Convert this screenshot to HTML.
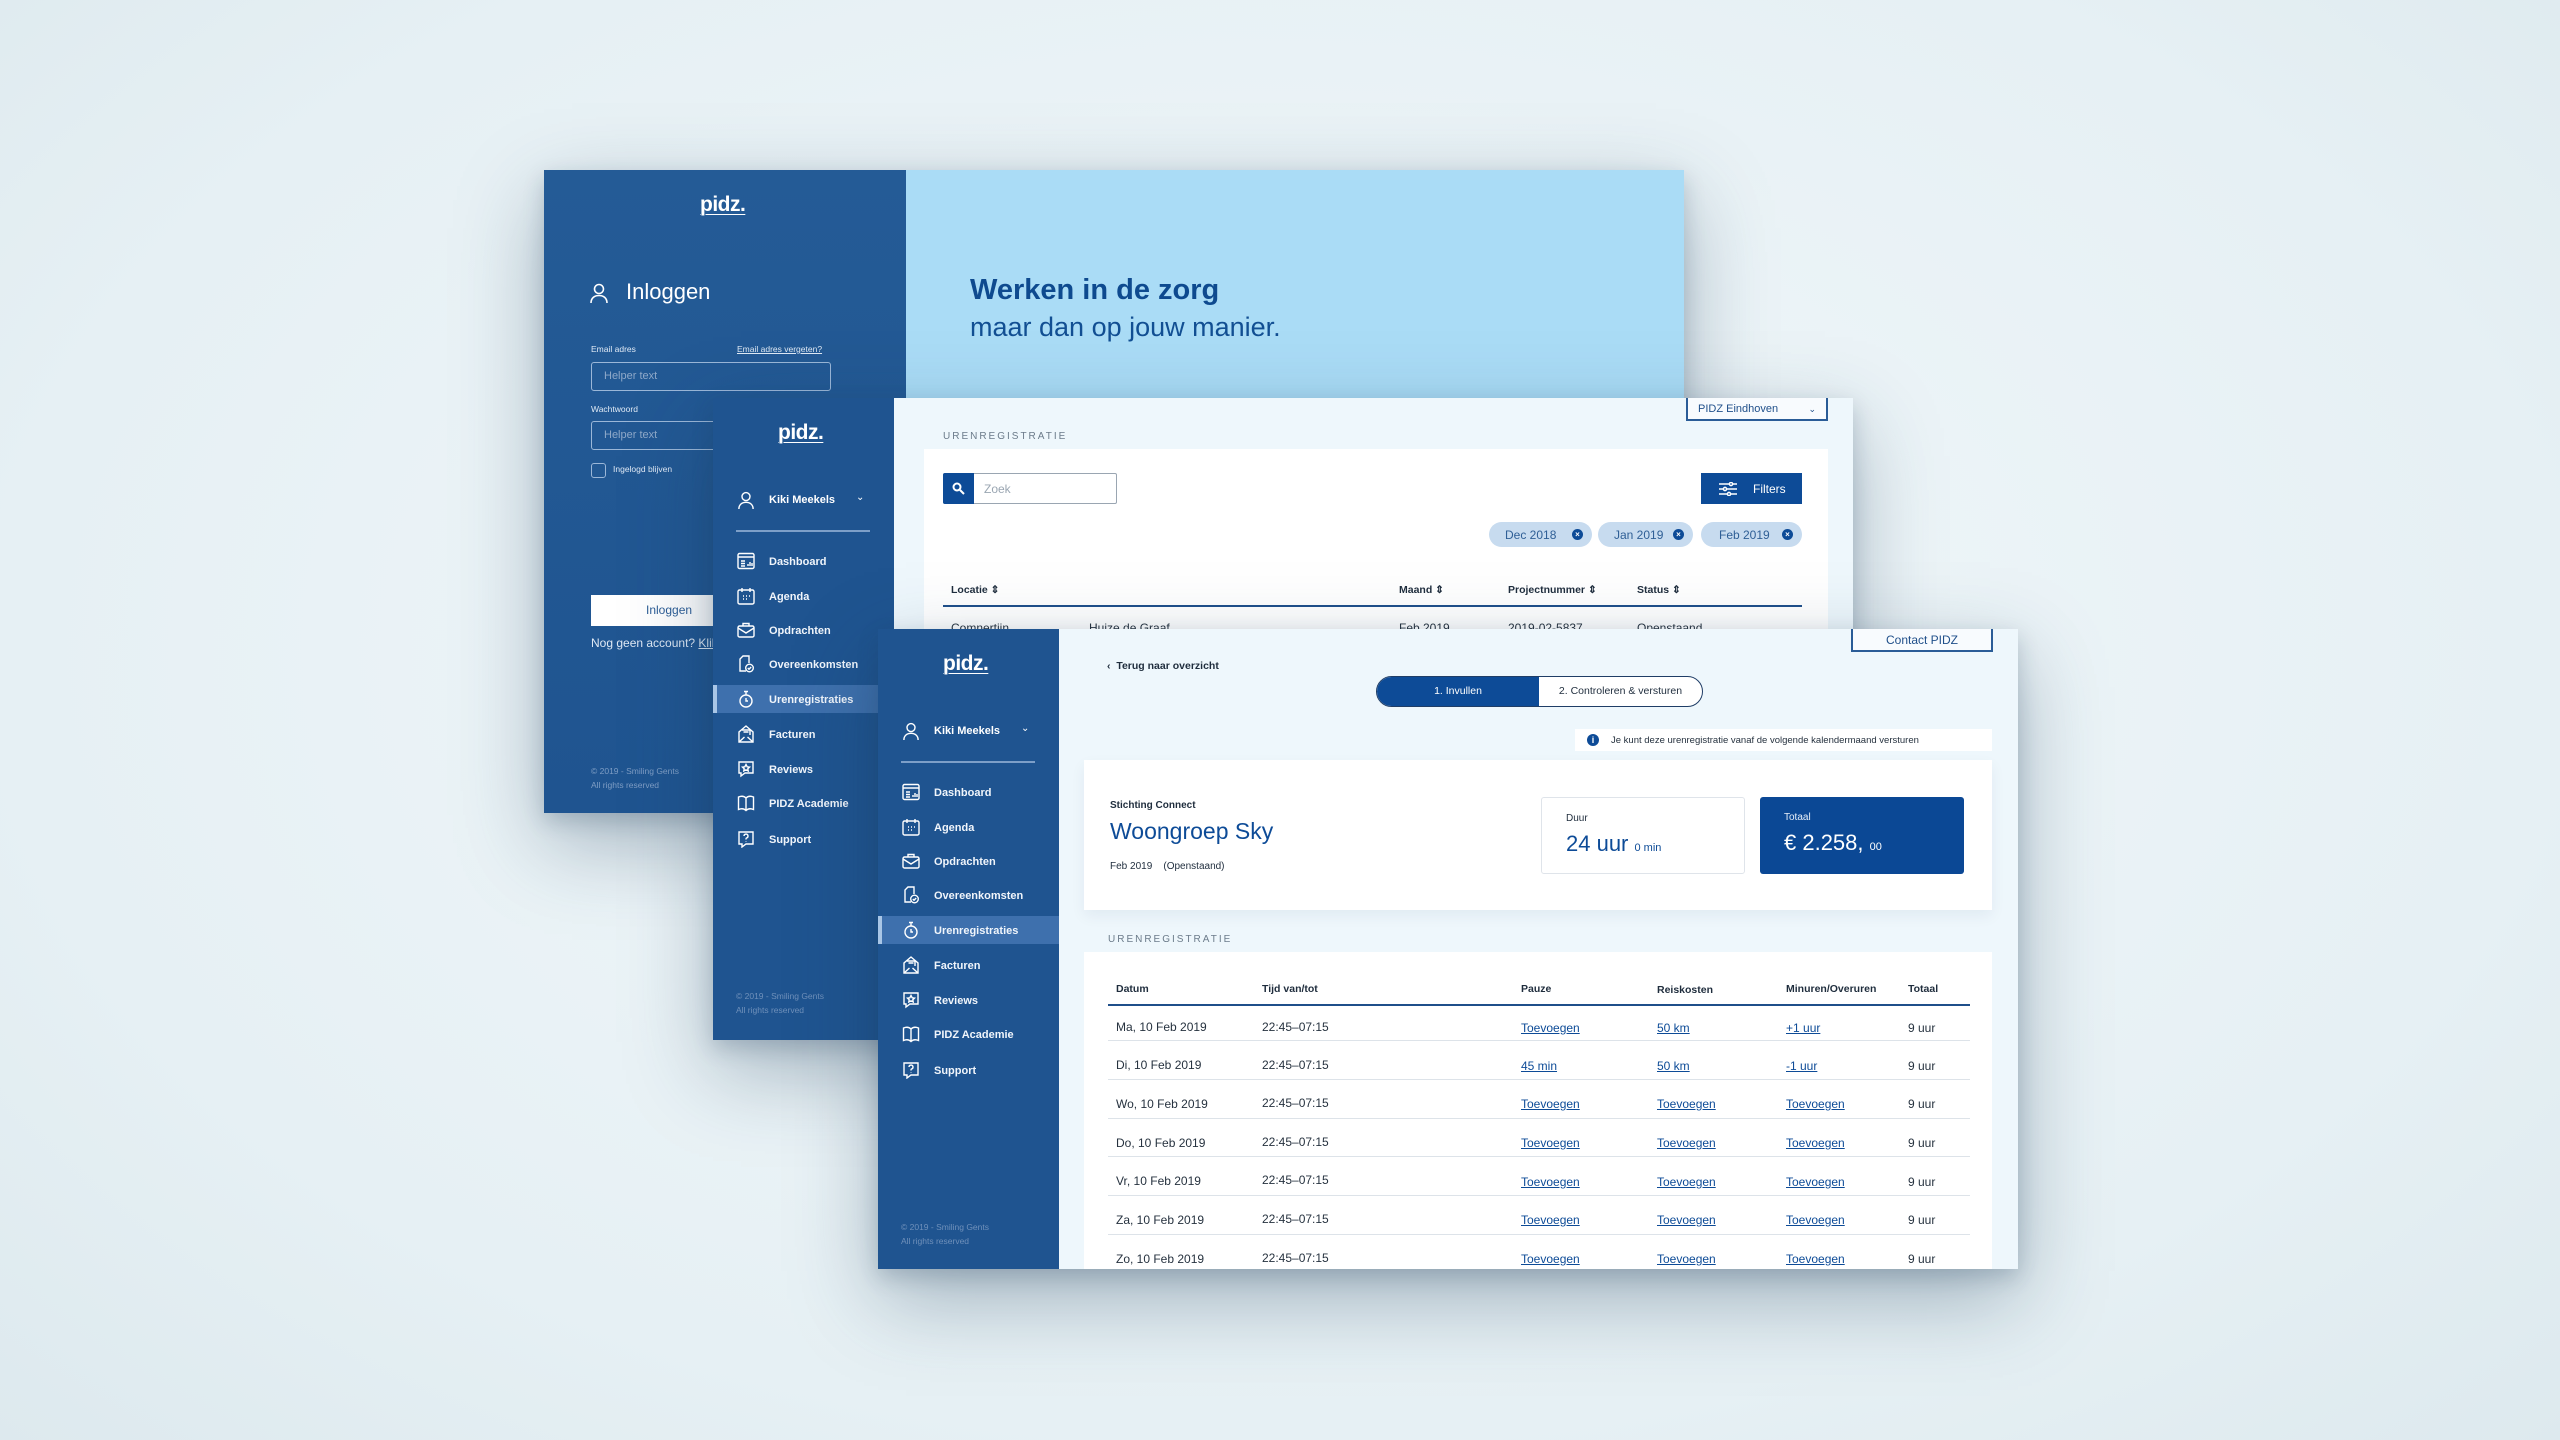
<!DOCTYPE html>
<html><head><meta charset="utf-8"><style>
*{margin:0;padding:0;box-sizing:border-box}
body{width:2560px;height:1440px;overflow:hidden;background:radial-gradient(ellipse at 50% 45%,#f2f8fb 0%,#e6f0f4 70%,#dde9ee 100%);font-family:"Liberation Sans",sans-serif;position:relative}
.a{position:absolute;white-space:nowrap}
.win{position:absolute;width:1140px;height:642px;overflow:hidden;box-shadow:0 30px 80px rgba(30,60,90,.35),0 8px 20px rgba(30,60,90,.2)}
.side{position:absolute;left:0;top:0;width:181px;height:100%;background:#1f5490;color:#fff}
.logo{font-weight:bold;font-size:21px;color:#fff;text-decoration:underline;text-decoration-thickness:1px;text-underline-offset:3px;letter-spacing:-.5px}
.mi{position:absolute;left:0;width:181px;height:28px;font-size:11px;font-weight:bold;color:#f0f5fb;line-height:30px;padding-left:56px}
.mi svg{position:absolute;left:24px;top:5px}
.mi.on{background:#3e70ad;border-left:4px solid #a9c6e6;padding-left:52px}
.mi.on svg{left:20px}
.content{position:absolute;left:181px;top:0;right:0;bottom:0;background:#eef7fc}
.lbl{font-size:10px;letter-spacing:2px;color:#6b7b8a}
.card{position:absolute;background:#fff}
.th{font-size:10.5px;font-weight:bold;color:#1f2d3d}
.td{font-size:12px;color:#26323f}
.lnk{font-size:12px;color:#0d4b97;text-decoration:underline}
.chip{position:absolute;height:25px;border-radius:13px;background:#c7dbef;color:#2f5f96;font-size:12px;line-height:25px;padding-left:16px}
.chip i{position:absolute;right:9px;top:7px;width:11px;height:11px;border-radius:50%;background:#0d4b97;color:#fff;font-size:8px;line-height:11px;text-align:center;font-style:normal;font-weight:bold}
</style></head><body>

<div class="win" style="left:544px;top:170px;height:643px;">
  <div style="position:absolute;left:0;top:0;width:362px;height:100%;background:linear-gradient(#245b96,#1f5490)"></div>
  <div style="position:absolute;left:362px;top:0;right:0;height:100%;background:#aadcf6"></div>
  <div class="a logo" style="left:156px;top:23px">pidz.</div>
  <svg class="a" style="left:46px;top:113px" width="18" height="22" viewBox="0 0 18 22" fill="none" stroke="#fff" stroke-width="1.6"><circle cx="9" cy="6" r="4.5"/><path d="M1 20c0-5 3.5-7.5 8-7.5s8 2.5 8 7.5"/></svg>
  <div class="a" style="left:82px;top:109px;font-size:22px;color:#fff">Inloggen</div>
  <div class="a" style="left:47px;top:174px;font-size:8.5px;color:#dfe9f5">Email adres</div>
  <div class="a" style="left:193px;top:174px;font-size:8.5px;color:#dfe9f5;text-decoration:underline">Email adres vergeten?</div>
  <div class="a" style="left:47px;top:192px;width:240px;height:29px;border:1.5px solid #9bb7d8;border-radius:3px;font-size:11px;color:#8fa9c9;line-height:26px;padding-left:12px">Helper text</div>
  <div class="a" style="left:47px;top:234px;font-size:8.5px;color:#dfe9f5">Wachtwoord</div>
  <div class="a" style="left:47px;top:251px;width:240px;height:29px;border:1.5px solid #9bb7d8;border-radius:3px;font-size:11px;color:#8fa9c9;line-height:26px;padding-left:12px">Helper text</div>
  <div class="a" style="left:47px;top:293px;width:15px;height:15px;border:1.5px solid #9bb7d8;border-radius:3px"></div>
  <div class="a" style="left:69px;top:294px;font-size:8.5px;color:#dfe9f5">Ingelogd blijven</div>
  <div class="a" style="left:47px;top:425px;width:240px;height:31px;background:#fff;font-size:12px;color:#2c5d96;line-height:31px;padding-left:55px">Inloggen</div>
  <div class="a" style="left:47px;top:466px;font-size:12px;color:#dfe9f5">Nog geen account? <u>Klik hier</u></div>
  <div class="a" style="left:47px;top:594px;font-size:8.5px;color:#7e9dc4;line-height:14px">© 2019 - Smiling Gents<br>All rights reserved</div>
  <div class="a" style="left:426px;top:104px;font-size:29px;font-weight:bold;color:#0e4a8f">Werken in de zorg</div>
  <div class="a" style="left:426px;top:142px;font-size:27px;color:#124f93">maar dan op jouw manier.</div>
</div>

<div class="win" style="left:713px;top:398px;">
  <div class="side">
    <div class="a logo" style="left:65px;top:23px">pidz.</div>
    <svg class="a" style="left:25px;top:93px" width="16" height="20" viewBox="0 0 18 22" fill="none" stroke="#fff" stroke-width="1.6"><circle cx="9" cy="6" r="4.5"/><path d="M1 20c0-5 3.5-7.5 8-7.5s8 2.5 8 7.5"/></svg>
    <div class="a" style="left:56px;top:96px;font-size:11px;font-weight:bold">Kiki Meekels</div>
    <div class="a" style="left:143px;top:94px;font-size:10px">⌄</div>
    <div class="a" style="left:23px;top:132px;width:134px;height:1.5px;background:#7d9fc8"></div>
    <div class="mi" style="top:149px"><svg width="18" height="18" viewBox="0 0 18 18" fill="none" stroke="#fff" stroke-width="1.4"><rect x="1" y="1.5" width="16" height="15" rx="1.5"/><path d="M1 5h16M4 9h4M4 11.5h4M4 14h4M11 14v-2M13 14v-4M15 14v-3"/></svg>Dashboard</div>
    <div class="mi" style="top:184px"><svg width="18" height="18" viewBox="0 0 18 18" fill="none" stroke="#fff" stroke-width="1.4"><rect x="1" y="3" width="16" height="14" rx="1.5"/><path d="M5 1v4M13 1v4M6 9h1M9 9h1M12 9h1M6 12h1M9 12h1"/></svg>Agenda</div>
    <div class="mi" style="top:218px"><svg width="18" height="18" viewBox="0 0 18 18" fill="none" stroke="#fff" stroke-width="1.4"><rect x="1" y="5" width="16" height="11" rx="1.5"/><path d="M6 5V2.5h6V5M1 7l8 5 8-5"/></svg>Opdrachten</div>
    <div class="mi" style="top:252px"><svg width="18" height="18" viewBox="0 0 18 18" fill="none" stroke="#fff" stroke-width="1.4"><path d="M9 16H3V4l3-3h6v7"/><circle cx="12.5" cy="13" r="3.8"/><path d="M10.8 13l1.2 1.2 2.2-2.2"/></svg>Overeenkomsten</div>
    <div class="mi on" style="top:287px"><svg width="18" height="18" viewBox="0 0 18 18" fill="none" stroke="#fff" stroke-width="1.4"><circle cx="9" cy="11" r="6"/><path d="M7 1.5h4M9 1.5V5M9 8v3h2"/></svg>Urenregistraties</div>
    <div class="mi" style="top:322px"><svg width="18" height="18" viewBox="0 0 18 18" fill="none" stroke="#fff" stroke-width="1.4"><path d="M2 7v10h14V7L9 1z"/><path d="M2 17l5.5-5M16 17l-5.5-5M5 5h8v5M6.5 7h5"/></svg>Facturen</div>
    <div class="mi" style="top:357px"><svg width="18" height="18" viewBox="0 0 18 18" fill="none" stroke="#fff" stroke-width="1.4"><path d="M2 2h14v11H8l-4 3v-3H2z"/><path d="M9 4.5l1.2 2.3 2.3.3-1.7 1.6.4 2.3L9 9.8 6.8 11l.4-2.3L5.5 7.1l2.3-.3z"/></svg>Reviews</div>
    <div class="mi" style="top:391px"><svg width="18" height="18" viewBox="0 0 18 18" fill="none" stroke="#fff" stroke-width="1.4"><path d="M9 4C7 2 4 2 1.5 3v12.5c2.5-1 5.5-1 7.5 1 2-2 5-2 7.5-1V3C14 2 11 2 9 4v12.5"/></svg>PIDZ Academie</div>
    <div class="mi" style="top:427px"><svg width="18" height="18" viewBox="0 0 18 18" fill="none" stroke="#fff" stroke-width="1.4"><path d="M2 2h14v12H9l-4 3v-3H2z"/><path d="M7 6a2 2 0 1 1 2.5 2c-.5.2-.5.6-.5 1.5M9 11.5v.5"/></svg>Support</div>
    <div class="a" style="left:23px;top:591px;font-size:8.5px;color:#6f90ba;line-height:14px">© 2019 - Smiling Gents<br>All rights reserved</div>
  </div>
  <div class="content">
    <div class="a" style="left:792px;top:0;width:142px;height:23px;border:2px solid #2a5c97;border-top:none;background:#f8fbfe;font-size:11px;color:#1f4f8a;line-height:22px;padding-left:10px">PIDZ Eindhoven<span style="position:absolute;right:10px;font-size:9px">⌄</span></div>
    <div class="a lbl" style="left:49px;top:33px">URENREGISTRATIE</div>
    <div class="card" style="left:30px;top:51px;width:904px;height:600px">
      <div class="a" style="left:19px;top:24px;width:174px;height:31px;border:1.5px solid #9aa6b2;border-radius:2px;background:#fff"></div>
      <div class="a" style="left:19px;top:24px;width:31px;height:31px;background:#0d4b97;border-radius:2px 0 0 2px"><svg style="position:absolute;left:9px;top:9px" width="13" height="13" viewBox="0 0 13 13" fill="none" stroke="#fff" stroke-width="2"><circle cx="5" cy="5" r="3.5"/><path d="M8 8l4 4"/></svg></div>
      <div class="a" style="left:60px;top:33px;font-size:12px;color:#9aa6b2">Zoek</div>
      <div class="a" style="left:777px;top:24px;width:101px;height:31px;background:#0d4b97;color:#fff;font-size:12px;line-height:32px;padding-left:52px"><svg style="position:absolute;left:17px;top:9px" width="20" height="14" viewBox="0 0 20 14" fill="none" stroke="#fff" stroke-width="1.5"><path d="M1 2h18M1 7h18M1 12h18"/><circle cx="13" cy="2" r="1.6" fill="#0d4b97"/><circle cx="7" cy="7" r="1.6" fill="#0d4b97"/><circle cx="11" cy="12" r="1.6" fill="#0d4b97"/></svg>Filters</div>
      <div class="chip" style="left:565px;top:73px;width:103px;line-height:27px">Dec 2018<i>×</i></div>
      <div class="chip" style="left:674px;top:73px;width:95px;line-height:27px">Jan 2019<i>×</i></div>
      <div class="chip" style="left:777px;top:73px;width:101px;padding-left:18px;line-height:27px">Feb 2019<i>×</i></div>
      <div class="a th" style="left:27px;top:135px">Locatie ⇕</div>
      <div class="a th" style="left:475px;top:135px">Maand ⇕</div>
      <div class="a th" style="left:584px;top:135px">Projectnummer ⇕</div>
      <div class="a th" style="left:713px;top:135px">Status ⇕</div>
      <div class="a" style="left:19px;top:156px;width:859px;height:2px;background:#1f4f8a"></div>
      <div class="a td" style="left:27px;top:172px">Comnertiin</div>
      <div class="a td" style="left:165px;top:172px">Huize de Graaf</div>
      <div class="a td" style="left:475px;top:172px">Feb 2019</div>
      <div class="a td" style="left:584px;top:172px">2019-02-5837</div>
      <div class="a td" style="left:713px;top:172px">Openstaand</div>
    </div>
  </div>
</div>

<div class="win" style="left:878px;top:629px;height:640px;">
  <div class="side">
    <div class="a logo" style="left:65px;top:23px">pidz.</div>
    <svg class="a" style="left:25px;top:93px" width="16" height="20" viewBox="0 0 18 22" fill="none" stroke="#fff" stroke-width="1.6"><circle cx="9" cy="6" r="4.5"/><path d="M1 20c0-5 3.5-7.5 8-7.5s8 2.5 8 7.5"/></svg>
    <div class="a" style="left:56px;top:96px;font-size:11px;font-weight:bold">Kiki Meekels</div>
    <div class="a" style="left:143px;top:94px;font-size:10px">⌄</div>
    <div class="a" style="left:23px;top:132px;width:134px;height:1.5px;background:#7d9fc8"></div>
    <div class="mi" style="top:149px"><svg width="18" height="18" viewBox="0 0 18 18" fill="none" stroke="#fff" stroke-width="1.4"><rect x="1" y="1.5" width="16" height="15" rx="1.5"/><path d="M1 5h16M4 9h4M4 11.5h4M4 14h4M11 14v-2M13 14v-4M15 14v-3"/></svg>Dashboard</div>
    <div class="mi" style="top:184px"><svg width="18" height="18" viewBox="0 0 18 18" fill="none" stroke="#fff" stroke-width="1.4"><rect x="1" y="3" width="16" height="14" rx="1.5"/><path d="M5 1v4M13 1v4M6 9h1M9 9h1M12 9h1M6 12h1M9 12h1"/></svg>Agenda</div>
    <div class="mi" style="top:218px"><svg width="18" height="18" viewBox="0 0 18 18" fill="none" stroke="#fff" stroke-width="1.4"><rect x="1" y="5" width="16" height="11" rx="1.5"/><path d="M6 5V2.5h6V5M1 7l8 5 8-5"/></svg>Opdrachten</div>
    <div class="mi" style="top:252px"><svg width="18" height="18" viewBox="0 0 18 18" fill="none" stroke="#fff" stroke-width="1.4"><path d="M9 16H3V4l3-3h6v7"/><circle cx="12.5" cy="13" r="3.8"/><path d="M10.8 13l1.2 1.2 2.2-2.2"/></svg>Overeenkomsten</div>
    <div class="mi on" style="top:287px"><svg width="18" height="18" viewBox="0 0 18 18" fill="none" stroke="#fff" stroke-width="1.4"><circle cx="9" cy="11" r="6"/><path d="M7 1.5h4M9 1.5V5M9 8v3h2"/></svg>Urenregistraties</div>
    <div class="mi" style="top:322px"><svg width="18" height="18" viewBox="0 0 18 18" fill="none" stroke="#fff" stroke-width="1.4"><path d="M2 7v10h14V7L9 1z"/><path d="M2 17l5.5-5M16 17l-5.5-5M5 5h8v5M6.5 7h5"/></svg>Facturen</div>
    <div class="mi" style="top:357px"><svg width="18" height="18" viewBox="0 0 18 18" fill="none" stroke="#fff" stroke-width="1.4"><path d="M2 2h14v11H8l-4 3v-3H2z"/><path d="M9 4.5l1.2 2.3 2.3.3-1.7 1.6.4 2.3L9 9.8 6.8 11l.4-2.3L5.5 7.1l2.3-.3z"/></svg>Reviews</div>
    <div class="mi" style="top:391px"><svg width="18" height="18" viewBox="0 0 18 18" fill="none" stroke="#fff" stroke-width="1.4"><path d="M9 4C7 2 4 2 1.5 3v12.5c2.5-1 5.5-1 7.5 1 2-2 5-2 7.5-1V3C14 2 11 2 9 4v12.5"/></svg>PIDZ Academie</div>
    <div class="mi" style="top:427px"><svg width="18" height="18" viewBox="0 0 18 18" fill="none" stroke="#fff" stroke-width="1.4"><path d="M2 2h14v12H9l-4 3v-3H2z"/><path d="M7 6a2 2 0 1 1 2.5 2c-.5.2-.5.6-.5 1.5M9 11.5v.5"/></svg>Support</div>
    <div class="a" style="left:23px;top:591px;font-size:8.5px;color:#6f90ba;line-height:14px">© 2019 - Smiling Gents<br>All rights reserved</div>
  </div>
  <div class="content">
    <div class="a" style="left:792px;top:0;width:142px;height:23px;border:2px solid #2a5c97;border-top:none;background:#f8fbfe;font-size:12px;color:#1f4f8a;line-height:22px;text-align:center">Contact PIDZ</div>
    <div class="a" style="left:48px;top:31px;font-size:10.5px;font-weight:bold;color:#1f2d3d">‹&nbsp;&nbsp;Terug naar overzicht</div>
    <div class="a" style="left:317px;top:47px;width:327px;height:31px;border:1.5px solid #1f3d66;border-radius:16px;background:#fff;overflow:hidden">
      <div style="position:absolute;left:0;top:0;width:162px;height:100%;background:#0d4b97;color:#fff;font-size:10.5px;line-height:29px;text-align:center">1. Invullen</div>
      <div style="position:absolute;left:162px;top:0;right:0;height:100%;color:#1f2d3d;font-size:10.5px;line-height:29px;text-align:center">2. Controleren &amp; versturen</div>
    </div>
    <div class="a" style="left:516px;top:100px;width:417px;height:22px;background:#fff;font-size:9.5px;color:#26323f;line-height:23px;padding-left:36px"><span style="position:absolute;left:12px;top:5px;width:12px;height:12px;border-radius:50%;background:#0d4b97;color:#fff;font-size:9px;line-height:12px;text-align:center;font-weight:bold">i</span>Je kunt deze urenregistratie vanaf de volgende kalendermaand versturen</div>
    <div class="card" style="left:25px;top:131px;width:908px;height:150px;box-shadow:0 6px 14px rgba(0,40,80,.06)">
      <div class="a" style="left:26px;top:40px;font-size:10px;font-weight:bold;color:#1f2d3d">Stichting Connect</div>
      <div class="a" style="left:26px;top:58px;font-size:23px;color:#0d4b97">Woongroep Sky</div>
      <div class="a" style="left:26px;top:101px;font-size:10px;color:#1f2d3d">Feb 2019&nbsp;&nbsp;&nbsp;&nbsp;(Openstaand)</div>
      <div class="a" style="left:457px;top:37px;width:204px;height:77px;border:1.5px solid #dfe4ea;border-radius:3px;background:#fff">
        <div class="a" style="left:24px;top:15px;font-size:10px;color:#1f2d3d">Duur</div>
        <div class="a" style="left:24px;top:33px;font-size:22px;color:#0d4b97">24 uur <span style="font-size:11px">0 min</span></div>
      </div>
      <div class="a" style="left:676px;top:37px;width:204px;height:77px;background:#0b4895;border-radius:3px">
        <div class="a" style="left:24px;top:15px;font-size:10px;color:#e6eef8">Totaal</div>
        <div class="a" style="left:24px;top:33px;font-size:22px;color:#fff">€ 2.258, <span style="font-size:11px">00</span></div>
      </div>
    </div>
    <div class="a lbl" style="left:49px;top:305px">URENREGISTRATIE</div>
    <div class="card" style="left:25px;top:323px;width:908px;height:330px">
      <div class="a th" style="left:32px;top:31px">Datum</div>
      <div class="a th" style="left:178px;top:31px">Tijd van/tot</div>
      <div class="a th" style="left:437px;top:31px">Pauze</div>
      <div class="a th" style="left:573px;top:32px">Reiskosten</div>
      <div class="a th" style="left:702px;top:31px">Minuren/Overuren</div>
      <div class="a th" style="left:824px;top:31px">Totaal</div>
      <div class="a" style="left:24px;top:52px;width:862px;height:2px;background:#1f4f8a"></div>
    </div>
  </div>
</div>

<div style="position:absolute;left:1084px;top:952px;width:908px;height:317px;overflow:hidden">
  <div class="a td" style="left:32px;top:68px">Ma, 10 Feb 2019</div><div class="a td" style="left:178px;top:68px">22:45–07:15</div><div class="a lnk" style="left:437px;top:69px">Toevoegen</div><div class="a lnk" style="left:573px;top:69px">50 km</div><div class="a lnk" style="left:702px;top:69px">+1 uur</div><div class="a td" style="left:824px;top:69px">9 uur</div>
  <div class="a" style="left:24px;top:88px;width:862px;height:1px;background:#dde3e9"></div>
  <div class="a td" style="left:32px;top:106px">Di, 10 Feb 2019</div><div class="a td" style="left:178px;top:106px">22:45–07:15</div><div class="a lnk" style="left:437px;top:107px">45 min</div><div class="a lnk" style="left:573px;top:107px">50 km</div><div class="a lnk" style="left:702px;top:107px">-1 uur</div><div class="a td" style="left:824px;top:107px">9 uur</div>
  <div class="a" style="left:24px;top:127px;width:862px;height:1px;background:#dde3e9"></div>
  <div class="a td" style="left:32px;top:145px">Wo, 10 Feb 2019</div><div class="a td" style="left:178px;top:144px">22:45–07:15</div><div class="a lnk" style="left:437px;top:145px">Toevoegen</div><div class="a lnk" style="left:573px;top:145px">Toevoegen</div><div class="a lnk" style="left:702px;top:145px">Toevoegen</div><div class="a td" style="left:824px;top:145px">9 uur</div>
  <div class="a" style="left:24px;top:166px;width:862px;height:1px;background:#dde3e9"></div>
  <div class="a td" style="left:32px;top:184px">Do, 10 Feb 2019</div><div class="a td" style="left:178px;top:183px">22:45–07:15</div><div class="a lnk" style="left:437px;top:184px">Toevoegen</div><div class="a lnk" style="left:573px;top:184px">Toevoegen</div><div class="a lnk" style="left:702px;top:184px">Toevoegen</div><div class="a td" style="left:824px;top:184px">9 uur</div>
  <div class="a" style="left:24px;top:204px;width:862px;height:1px;background:#dde3e9"></div>
  <div class="a td" style="left:32px;top:222px">Vr, 10 Feb 2019</div><div class="a td" style="left:178px;top:221px">22:45–07:15</div><div class="a lnk" style="left:437px;top:223px">Toevoegen</div><div class="a lnk" style="left:573px;top:223px">Toevoegen</div><div class="a lnk" style="left:702px;top:223px">Toevoegen</div><div class="a td" style="left:824px;top:223px">9 uur</div>
  <div class="a" style="left:24px;top:243px;width:862px;height:1px;background:#dde3e9"></div>
  <div class="a td" style="left:32px;top:261px">Za, 10 Feb 2019</div><div class="a td" style="left:178px;top:260px">22:45–07:15</div><div class="a lnk" style="left:437px;top:261px">Toevoegen</div><div class="a lnk" style="left:573px;top:261px">Toevoegen</div><div class="a lnk" style="left:702px;top:261px">Toevoegen</div><div class="a td" style="left:824px;top:261px">9 uur</div>
  <div class="a" style="left:24px;top:282px;width:862px;height:1px;background:#dde3e9"></div>
  <div class="a td" style="left:32px;top:300px">Zo, 10 Feb 2019</div><div class="a td" style="left:178px;top:299px">22:45–07:15</div><div class="a lnk" style="left:437px;top:300px">Toevoegen</div><div class="a lnk" style="left:573px;top:300px">Toevoegen</div><div class="a lnk" style="left:702px;top:300px">Toevoegen</div><div class="a td" style="left:824px;top:300px">9 uur</div>
</div>

</body></html>
